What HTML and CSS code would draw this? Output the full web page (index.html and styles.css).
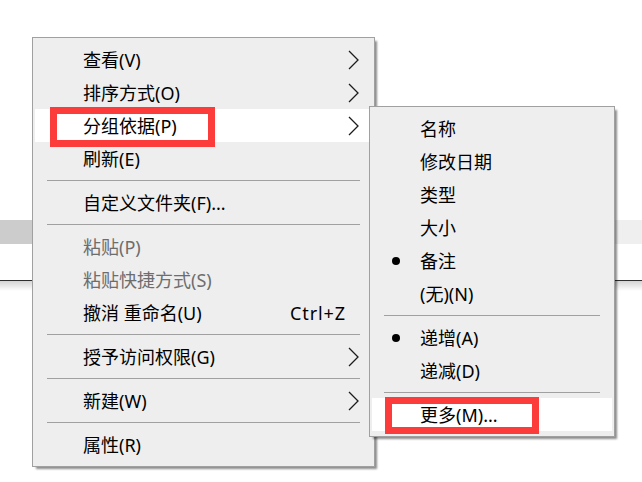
FILE: index.html
```html
<!DOCTYPE html>
<html lang="zh-CN">
<head>
<meta charset="utf-8">
<title>分组依据</title>
<link rel="stylesheet" href="styles.css">
</head>
<body>
<div class="band"></div>
<div class="rule"></div>

<div class="menu main-menu">
  <div class="item"><span class="label">查看(V)</span><svg class="chev" viewBox="0 0 11 20"><path d="M1 1 L10 10 L1 19"/></svg></div>
  <div class="item"><span class="label">排序方式(O)</span><svg class="chev" viewBox="0 0 11 20"><path d="M1 1 L10 10 L1 19"/></svg></div>
  <div class="item hot"><span class="label">分组依据(P)</span><svg class="chev" viewBox="0 0 11 20"><path d="M1 1 L10 10 L1 19"/></svg></div>
  <div class="item"><span class="label">刷新(E)</span></div>
  <div class="sep"></div>
  <div class="item"><span class="label">自定义文件夹(F)...</span></div>
  <div class="sep"></div>
  <div class="item disabled"><span class="label">粘贴(P)</span></div>
  <div class="item disabled"><span class="label">粘贴快捷方式(S)</span></div>
  <div class="item"><span class="label">撤消 重命名(U)</span><span class="shortcut">Ctrl+Z</span></div>
  <div class="sep"></div>
  <div class="item"><span class="label">授予访问权限(G)</span><svg class="chev" viewBox="0 0 11 20"><path d="M1 1 L10 10 L1 19"/></svg></div>
  <div class="sep"></div>
  <div class="item"><span class="label">新建(W)</span><svg class="chev" viewBox="0 0 11 20"><path d="M1 1 L10 10 L1 19"/></svg></div>
  <div class="sep"></div>
  <div class="item"><span class="label">属性(R)</span></div>
</div>

<div class="menu sub-menu">
  <div class="item"><span class="check"></span><span class="label">名称</span></div>
  <div class="item"><span class="check"></span><span class="label">修改日期</span></div>
  <div class="item"><span class="check"></span><span class="label">类型</span></div>
  <div class="item"><span class="check"></span><span class="label">大小</span></div>
  <div class="item"><span class="check"><span class="dot"></span></span><span class="label">备注</span></div>
  <div class="item"><span class="check"></span><span class="label">(无)(N)</span></div>
  <div class="sep"></div>
  <div class="item"><span class="check"><span class="dot"></span></span><span class="label">递增(A)</span></div>
  <div class="item"><span class="check"></span><span class="label">递减(D)</span></div>
  <div class="sep"></div>
  <div class="item hot"><span class="check"></span><span class="label">更多(M)...</span></div>
</div>

<div class="mark mark-group"></div>
<div class="mark mark-more"></div>
</body>
</html>
```

FILE: styles.css
```css
html, body {
  margin: 0;
  padding: 0;
  background: #ffffff;
}

body {
  width: 642px;
  height: 482px;
  overflow: hidden;
  position: relative;
  font-family: "Noto Sans", "Noto Sans CJK SC", sans-serif;
  font-size: 18px;
  color: #000000;
}

.band {
  margin-top: 220px;
  height: 24px;
  background: linear-gradient(to right, #cccccc 0, #cccccc 40px, #efefef 40px);
}

.rule {
  margin-top: 36px;
  height: 10px;
  border-top: 1px solid #2f2f2f;
  background: linear-gradient(#d4d4d4, #ffffff);
}

.menu {
  position: absolute;
  box-sizing: border-box;
  background: #eeeeee;
  border: 1px solid #a0a0a0;
  padding: 5px 2px;
  box-shadow: 3px 3px 2px -1px rgba(0, 0, 0, 0.45);
}

.main-menu {
  left: 32px;
  top: 37px;
  width: 343px;
}

.sub-menu {
  left: 369px;
  top: 106px;
  width: 246px;
}

.item {
  height: 33px;
  display: flex;
  align-items: center;
  white-space: nowrap;
}

.main-menu .item {
  padding: 0 13px 0 48px;
}

.item.hot {
  background: #ffffff;
}

.item.disabled {
  color: #6d6d6d;
}

.label {
  line-height: 1;
}

.shortcut {
  margin-left: auto;
  margin-right: 13px;
  line-height: 1;
  letter-spacing: 0.9px;
}

.chev {
  margin-left: auto;
  width: 11px;
  height: 20px;
  fill: none;
  stroke: #1c1c1c;
  stroke-width: 1.3;
}

.sep {
  height: 1px;
  margin: 5px 12px;
  background: #a0a0a0;
}

.check {
  width: 48px;
  height: 33px;
  display: flex;
  align-items: center;
  justify-content: center;
  flex: none;
}

.dot {
  width: 8px;
  height: 8px;
  border-radius: 50%;
  background: #000000;
}

.mark {
  position: absolute;
  box-sizing: border-box;
  border: 7px solid #fc3b3b;
}

.mark-group {
  left: 50px;
  top: 107px;
  width: 165px;
  height: 40px;
}

.mark-more {
  left: 385px;
  top: 397px;
  width: 154px;
  height: 37px;
}
```
